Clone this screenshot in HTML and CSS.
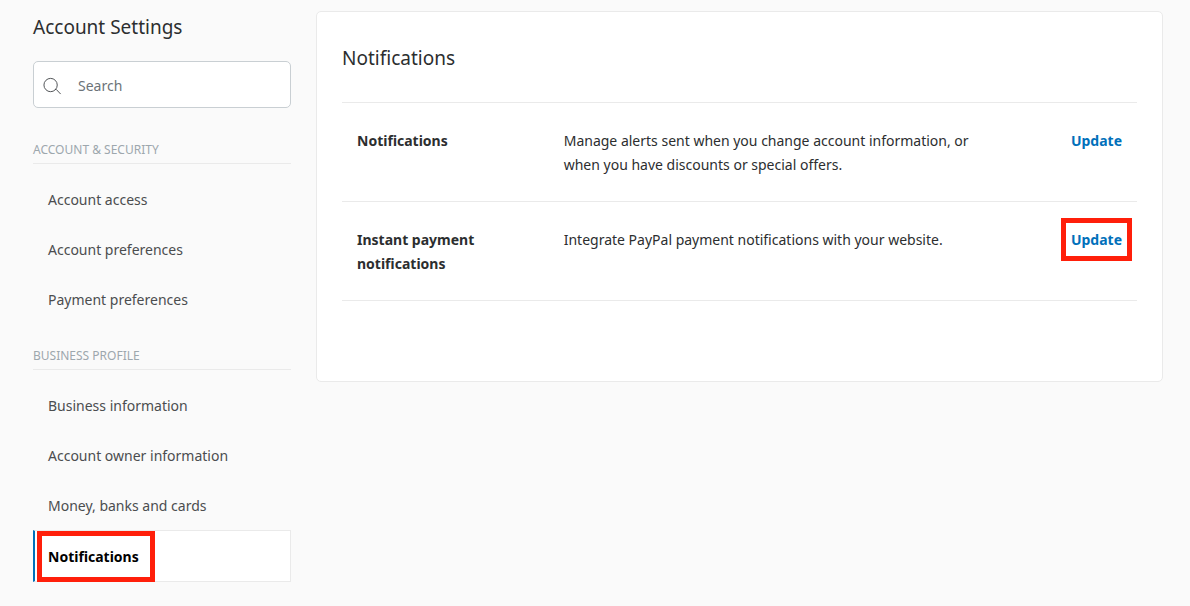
FILE: index.html
```html
<!DOCTYPE html>
<html lang="en">
<head>
  <meta charset="UTF-8">
  <meta name="viewport" content="width=device-width, initial-scale=1">
  <title>Account Settings</title>
  <link rel="stylesheet" href="styles.css">
</head>
<body>
<div class="wrap">
  <aside class="sidebar">
    <h1>Account Settings</h1>
    <form class="search">
      <svg class="search-icon" viewBox="0 0 20 20" aria-hidden="true">
        <circle cx="8" cy="9.5" r="7"/>
        <path d="M12.6 14.2 L14 14.2 L18.6 19"/>
      </svg>
      <input type="search" placeholder="Search" aria-label="Search">
    </form>
    <nav>
      <h2>ACCOUNT &amp; SECURITY</h2>
      <ul>
        <li><a href="#">Account access</a></li>
        <li><a href="#">Account preferences</a></li>
        <li><a href="#">Payment preferences</a></li>
      </ul>
      <h2>BUSINESS PROFILE</h2>
      <ul>
        <li><a href="#">Business information</a></li>
        <li><a href="#">Account owner information</a></li>
        <li><a href="#">Money, banks and cards</a></li>
        <li class="active"><a href="#" aria-current="page"><span class="marked">Notifications</span></a></li>
      </ul>
    </nav>
  </aside>
  <main class="panel">
    <h2>Notifications</h2>
    <table>
      <tr>
        <th scope="row">Notifications</th>
        <td>Manage alerts sent when you change account information, or when you have discounts or special offers.</td>
        <td class="action"><a href="#">Update</a></td>
      </tr>
      <tr>
        <th scope="row">Instant payment notifications</th>
        <td>Integrate PayPal payment notifications with your website.</td>
        <td class="action"><a href="#" class="marked">Update</a></td>
      </tr>
    </table>
  </main>
</div>
</body>
</html>
```
FILE: styles.css
```css
* {
  box-sizing: border-box;
  margin: 0;
  padding: 0;
}
body {
  background-color: #fafafa;
  color: #2c2e2f;
  font-family: "Noto Sans", "Open Sans", sans-serif;
  font-size: 14px;
  line-height: 24px;
}
a {
  text-decoration: none;
}
.wrap {
  display: flex;
  align-items: flex-start;
  gap: 25px;
  padding: 11px 27px 24px 33px;
}

/* left menu */
.sidebar {
  flex: 0 0 258px;
}
.sidebar h1 {
  margin-bottom: 18px;
  font-size: 19px;
  font-weight: 400;
  line-height: 32px;
}
.search {
  display: flex;
  align-items: center;
  gap: 16px;
  height: 47px;
  margin-bottom: 30px;
  padding: 2px 9px 0;
  border: 1px solid #c9cfd3;
  border-radius: 5px;
  background-color: #fff;
}
.search-icon {
  flex: none;
  width: 19px;
  height: 19px;
  fill: none;
  stroke: #4a4d50;
  stroke-width: 1;
}
.search input {
  flex: 1;
  min-width: 0;
  border: 0;
  outline: 0;
  background: none;
  color: #2c2e2f;
  font: inherit;
}
.search input::placeholder {
  color: #6c7378;
}
.sidebar h2 {
  padding-bottom: 1px;
  border-bottom: 1px solid #eaeaea;
  color: #9da7ad;
  font-size: 12px;
  font-weight: 400;
}
.sidebar ul {
  padding: 11px 0 19px;
  list-style: none;
}
.sidebar li a {
  display: block;
  padding: 13px 15px;
  color: #4b4d4f;
}
.sidebar .active {
  margin-top: -1px;
}
.sidebar .active a {
  padding: 14px 14px 12px 13px;
  border: 1px solid #eaeaea;
  border-left: 2px solid #0070ba;
  background-color: #fff;
  color: #000;
  font-weight: 700;
}

/* right panel */
.panel {
  flex: 1;
  padding: 30px 25px 80px;
  border: 1px solid #eaeaea;
  border-radius: 5px;
  background-color: #fff;
}
.panel h2 {
  margin-bottom: 28px;
  font-size: 19px;
  font-weight: 400;
  line-height: 32px;
}
.panel table {
  width: 100%;
  border-collapse: separate;
  border-spacing: 0;
  border-top: 1px solid #eaeaea;
}
.panel th,
.panel td {
  padding: 26px 15px 24px;
  border-bottom: 1px solid #eaeaea;
  text-align: left;
  vertical-align: top;
}
.panel th {
  width: 26%;
  padding-right: 60px;
}
.panel td {
  width: 56%;
}
.panel .action {
  width: 18%;
  text-align: right;
}
.action a {
  color: #0070ba;
  font-weight: 700;
}

/* red frame around the steps to follow */
.marked {
  position: relative;
}
.marked::after {
  content: "";
  position: absolute;
  inset: -12px -10px;
  border: 5px solid #ff1f0a;
}
.sidebar .marked::after {
  inset: -16px -16px -16px -11px;
}
```
